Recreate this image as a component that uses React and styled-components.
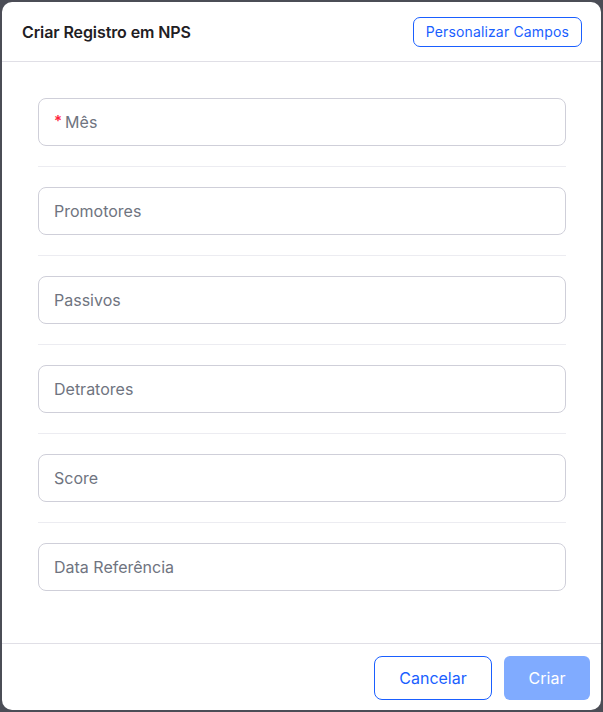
import styled, { createGlobalStyle } from 'styled-components';

const FIELDS = [
  { id: 'mes', label: 'Mês', required: true },
  { id: 'promotores', label: 'Promotores' },
  { id: 'passivos', label: 'Passivos' },
  { id: 'detratores', label: 'Detratores' },
  { id: 'score', label: 'Score' },
  { id: 'data', label: 'Data Referência' },
];

const GlobalStyle = createGlobalStyle`
  html, body {
    margin: 0;
    padding: 0;
    background: #4b4d56;
  }
  * {
    box-sizing: border-box;
  }
`;

const App = () => (
  <>
    <GlobalStyle />
    <Backdrop>
      <Modal>
        <Header>
          <Title>Criar Registro em NPS</Title>
          <CustomizeButton type="button">Personalizar Campos</CustomizeButton>
        </Header>
        <Body>
          {FIELDS.map((f, i) => (
            <FieldBlock key={f.id} $last={i === FIELDS.length - 1}>
              <Field>
                {f.required && <Required>*</Required>}
                <Placeholder>{f.label}</Placeholder>
              </Field>
            </FieldBlock>
          ))}
        </Body>
        <Footer>
          <CancelButton type="button">Cancelar</CancelButton>
          <SubmitButton type="button" disabled>Criar</SubmitButton>
        </Footer>
      </Modal>
    </Backdrop>
  </>
);

const Backdrop = styled.div`
  width: 603px;
  height: 712px;
  padding: 2px;
`;

const Modal = styled.div`
  width: 599px;
  height: 708px;
  background: #ffffff;
  border-radius: 10px;
  display: flex;
  flex-direction: column;
  font-family: Inter, "Noto Sans", sans-serif;
  overflow: hidden;
`;

const Header = styled.div`
  height: 60px;
  flex-shrink: 0;
  display: flex;
  align-items: center;
  justify-content: space-between;
  padding: 0 19px 0 20px;
  border-bottom: 1px solid #e0dfe6;
`;

const Title = styled.h2`
  margin: 0;
  font-size: 16px;
  font-weight: 600;
  color: #1f2024;
  letter-spacing: -0.1px;
`;

const CustomizeButton = styled.button`
  height: 30px;
  padding: 0 12px;
  border: 1px solid #1a5fff;
  border-radius: 7px;
  background: #ffffff;
  color: #1a5fff;
  font-family: inherit;
  font-size: 14px;
  font-weight: 400;
  letter-spacing: 0.15px;
  cursor: pointer;
`;

const Body = styled.div`
  flex: 1;
  padding: 36px 35px 0 36px;
  display: flex;
  flex-direction: column;
`;

const FieldBlock = styled.div`
  padding-bottom: ${({ $last }) => ($last ? '0' : '20px')};
  margin-bottom: ${({ $last }) => ($last ? '0' : '20px')};
  border-bottom: ${({ $last }) => ($last ? 'none' : '1px solid #ececf1')};
`;

const Field = styled.div`
  height: 48px;
  border: 1px solid #cfcfd9;
  border-radius: 8px;
  display: flex;
  align-items: center;
  gap: 3px;
  padding: 0 15px;
`;

const Required = styled.span`
  color: #ff1f3d;
  font-size: 15px;
  font-weight: 600;
  margin-top: -3px;
`;

const Placeholder = styled.span`
  color: #6f7480;
  font-size: 16px;
`;

const Footer = styled.div`
  height: 67px;
  flex-shrink: 0;
  border-top: 1px solid #e0dfe6;
  display: flex;
  justify-content: flex-end;
  align-items: flex-start;
  gap: 12px;
  padding: 12px 11px 0 0;
`;

const CancelButton = styled.button`
  width: 118px;
  height: 44px;
  border: 1px solid #1a5fff;
  border-radius: 8px;
  background: #ffffff;
  color: #1a5fff;
  font-family: inherit;
  font-size: 16px;
  cursor: pointer;
`;

const SubmitButton = styled.button`
  width: 86px;
  height: 44px;
  border: none;
  border-radius: 6px;
  background: #80abff;
  color: #ffffff;
  font-family: inherit;
  font-size: 16px;
`;

export default App;
